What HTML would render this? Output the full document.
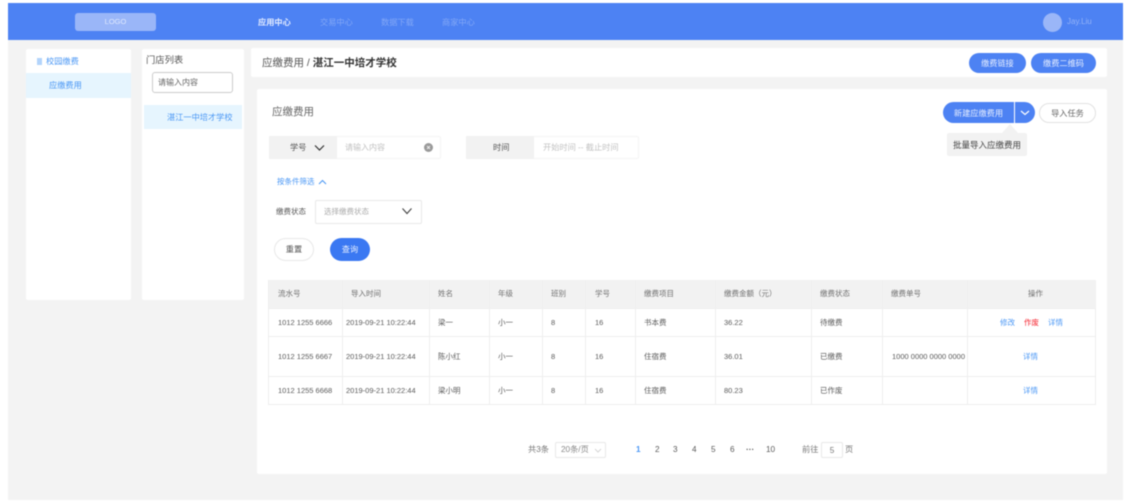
<!DOCTYPE html>
<html lang="zh">
<head>
<meta charset="utf-8">
<style>
html,body{margin:0;padding:0;background:#fff;width:1132px;height:503px;overflow:hidden}
body{font-family:"Liberation Sans","Noto Sans CJK SC",sans-serif;font-size:8.2px;color:#5a5a5a}
#p{position:absolute;left:0;top:0;width:1132px;height:503px;overflow:hidden;filter:blur(.4px)}
#p div{position:absolute;box-sizing:border-box}
#p svg{position:absolute}
.t{white-space:nowrap;line-height:12px;height:12px}
.r{font-size:7.5px}
.c{text-align:center}
.w{background:#fff;border-radius:2px}
.h{color:#707070}
.b{color:#4a97f5}
.l{width:1px;top:280px;height:124px;background:#eeeeee}
.n{width:827px;left:269px;height:1px;background:#eeeeee}
.btn{background:#4d82f3;color:#e6eeff;border-radius:12px;text-align:center}
</style>
</head>
<body>
<div id="p">
<div style="left:8px;top:3px;width:1115px;height:497px;background:#f3f3f3"></div>
<div style="left:8px;top:3px;width:1115px;height:37px;background:#4d82f3"></div>
<div style="left:75px;top:13px;width:81px;height:18px;background:#9ab6f8;border-radius:3px"></div>
<div class="t c" style="left:75px;top:16px;width:81px;color:#dfe8fd;font-size:7.5px">LOGO</div>
<div class="t" style="left:258px;top:16.5px;color:#e4ecff;font-weight:bold">应用中心</div>
<div class="t" style="left:320px;top:16.5px;color:#83a8f7">交易中心</div>
<div class="t" style="left:381px;top:16.5px;color:#83a8f7">数据下载</div>
<div class="t" style="left:442px;top:16.5px;color:#83a8f7">商家中心</div>
<div style="left:1043px;top:12.5px;width:19px;height:19px;background:#9ab6f8;border-radius:50%"></div>
<div class="t" style="left:1067px;top:16px;color:#94b3f8;font-size:8px">Jay.Liu</div>

<div class="w" style="left:26px;top:49px;width:105px;height:251px"></div>
<div style="left:37px;top:58px;width:5px;height:7px;background:#b3d4fb"></div>
<div class="t b" style="left:46px;top:55.5px">校园缴费</div>
<div style="left:26px;top:73px;width:105px;height:25px;background:#e6f5fe"></div>
<div class="t b" style="left:49px;top:80px">应缴费用</div>

<div class="w" style="left:142px;top:49px;width:102px;height:251px"></div>
<div class="t" style="left:146px;top:54px;font-size:9.3px;color:#555">门店列表</div>
<div class="w" style="left:152px;top:71.5px;width:81px;height:21px;border:1px solid #ccc;border-radius:3px"></div>
<div class="t" style="left:158px;top:76.5px;color:#666;font-size:8px">请输入内容</div>
<div style="left:144px;top:105px;width:98px;height:24px;background:#e6f5fe"></div>
<div class="t b" style="left:167px;top:111.5px;font-size:8.2px">湛江一中培才学校</div>

<div class="w" style="left:251px;top:48px;width:856px;height:29px"></div>
<div class="t" style="left:262px;top:57px;font-size:10.5px;color:#555">应缴费用 / <b style="color:#333">湛江一中培才学校</b></div>
<div class="btn" style="left:969px;top:53px;width:57px;height:20px;line-height:22px">缴费链接</div>
<div class="btn" style="left:1031px;top:53px;width:65px;height:20px;line-height:22px">缴费二维码</div>

<div class="w" style="left:257px;top:89px;width:850px;height:385px"></div>
<div class="t" style="left:272px;top:106px;font-size:10.5px;color:#666">应缴费用</div>
<div class="btn" style="left:943px;top:102px;width:71px;height:21px;line-height:23px;border-radius:11px 0 0 11px">新建应缴费用</div>
<div class="btn" style="left:1015px;top:102px;width:20px;height:21px;border-radius:0 11px 11px 0"></div>
<svg style="left:1019px;top:109px" width="12" height="8"><path d="M2 2l4 3.500L10 2" fill="none" stroke="#fff" stroke-width="1.200"/></svg>
<div class="c" style="left:1039px;top:102.5px;width:57px;height:20px;border:1px solid #e2e2e2;border-radius:10px;line-height:19px;color:#666">导入任务</div>
<svg style="left:1002px;top:124px" width="16" height="9"><path d="M0 9L8 0l8 9z" fill="#f2f2f2"/></svg>
<div style="left:947px;top:133px;width:80px;height:23px;background:#f2f2f2;border-radius:2px"></div>
<div class="t" style="left:953px;top:138.5px;color:#444;font-size:8.500px">批量导入应缴费用</div>

<div style="left:268.500px;top:136px;width:172px;height:23px;border:1px solid #f4f4f4;border-radius:2px"></div>
<div style="left:269px;top:136px;width:68px;height:23px;background:#f2f2f2"></div>
<div class="t" style="left:290px;top:141.500px;color:#555">学号</div>
<svg style="left:314px;top:144px" width="11" height="8"><path d="M1 1.500l4.500 4.500L10 1.500" fill="none" stroke="#333" stroke-width="1.200"/></svg>
<div class="t" style="left:345px;top:141.500px;color:#c2c2c2;font-size:8px">请输入内容</div>
<svg style="left:424px;top:143px" width="9" height="9"><circle cx="4.500" cy="4.500" r="4.500" fill="#9a9a9a"/><path d="M3 3l3 3M6 3l-3 3" stroke="#eee" stroke-width=".9"/></svg>
<div style="left:466px;top:136px;width:173px;height:23px;border:1px solid #f4f4f4;border-radius:2px"></div>
<div style="left:466px;top:136px;width:68px;height:23px;background:#f2f2f2"></div>
<div class="t" style="left:493px;top:141.500px;color:#555">时间</div>
<div class="t" style="left:543px;top:141.500px;color:#c2c2c2">开始时间 -- 截止时间</div>

<div class="t b r" style="left:277px;top:176px">按条件筛选</div>
<svg style="left:318px;top:179px" width="9" height="6"><path d="M1 5l3.500-3.500L8 5" fill="none" stroke="#4a97f5" stroke-width="1"/></svg>
<div class="t r" style="left:276px;top:206px;color:#555">缴费状态</div>
<div style="left:315px;top:200px;width:107px;height:24px;border:1px solid #e8e8e8;border-radius:2px"></div>
<div class="t r" style="left:324px;top:206px;color:#aaa">选择缴费状态</div>
<svg style="left:401px;top:207px" width="12" height="9"><path d="M1.500 1.500L6 6.500l4.500-5" fill="none" stroke="#444" stroke-width="1.100"/></svg>
<div class="c" style="left:274px;top:238px;width:40px;height:23px;border:1px solid #e8e8e8;border-radius:12px;line-height:22px;color:#555">重置</div>
<div class="c" style="left:330px;top:238px;width:40px;height:23px;background:#3a78f2;border-radius:12px;line-height:23px;color:#e8f0ff">查询</div>

<div style="left:268px;top:279.500px;width:828px;height:125px;border:1px solid #eeeeee"></div>
<div style="left:268.500px;top:280px;width:827px;height:28.500px;background:#f2f2f2"></div>
<div class="n" style="top:308px"></div>
<div class="n" style="top:336px"></div>
<div class="n" style="top:376px"></div>
<div class="l" style="left:342px"></div>
<div class="l" style="left:429px"></div>
<div class="l" style="left:489px"></div>
<div class="l" style="left:542px"></div>
<div class="l" style="left:585px"></div>
<div class="l" style="left:635px"></div>
<div class="l" style="left:715px"></div>
<div class="l" style="left:811px"></div>
<div class="l" style="left:882px"></div>
<div class="l" style="left:967px"></div>

<div class="t h r" style="left:278px;top:288px">流水号</div>
<div class="t h r" style="left:351px;top:288px">导入时间</div>
<div class="t h r" style="left:438px;top:288px">姓名</div>
<div class="t h r" style="left:498px;top:288px">年级</div>
<div class="t h r" style="left:551px;top:288px">班别</div>
<div class="t h r" style="left:595px;top:288px">学号</div>
<div class="t h r" style="left:644px;top:288px">缴费项目</div>
<div class="t h r" style="left:724px;top:288px">缴费金额（元）</div>
<div class="t h r" style="left:820px;top:288px">缴费状态</div>
<div class="t h r" style="left:891px;top:288px">缴费单号</div>
<div class="t h r c" style="left:971px;top:288px;width:129px">操作</div>

<div class="t r" style="left:278px;top:317px">1012 1255 6666</div>
<div class="t r" style="left:346px;top:317px">2019-09-21 10:22:44</div>
<div class="t r" style="left:438px;top:317px">梁一</div>
<div class="t r" style="left:498px;top:317px">小一</div>
<div class="t r" style="left:551px;top:317px">8</div>
<div class="t r" style="left:595px;top:317px">16</div>
<div class="t r" style="left:644px;top:317px">书本费</div>
<div class="t r" style="left:724px;top:317px">36.22</div>
<div class="t r" style="left:820px;top:317px">待缴费</div>
<div class="t b r" style="left:1000px;top:317px">修改</div>
<div class="t r" style="left:1024px;top:317px;color:#f5222d">作废</div>
<div class="t b r" style="left:1048px;top:317px">详情</div>

<div class="t r" style="left:278px;top:351px">1012 1255 6667</div>
<div class="t r" style="left:346px;top:351px">2019-09-21 10:22:44</div>
<div class="t r" style="left:438px;top:351px">陈小红</div>
<div class="t r" style="left:498px;top:351px">小一</div>
<div class="t r" style="left:551px;top:351px">8</div>
<div class="t r" style="left:595px;top:351px">16</div>
<div class="t r" style="left:644px;top:351px">住宿费</div>
<div class="t r" style="left:724px;top:351px">36.01</div>
<div class="t r" style="left:820px;top:351px">已缴费</div>
<div class="t r" style="left:892px;top:351px">1000 0000 0000 0000</div>
<div class="t b r" style="left:1023px;top:351px">详情</div>

<div class="t r" style="left:278px;top:385px">1012 1255 6668</div>
<div class="t r" style="left:346px;top:385px">2019-09-21 10:22:44</div>
<div class="t r" style="left:438px;top:385px">梁小明</div>
<div class="t r" style="left:498px;top:385px">小一</div>
<div class="t r" style="left:551px;top:385px">8</div>
<div class="t r" style="left:595px;top:385px">16</div>
<div class="t r" style="left:644px;top:385px">住宿费</div>
<div class="t r" style="left:724px;top:385px">80.23</div>
<div class="t r" style="left:820px;top:385px">已作废</div>
<div class="t b r" style="left:1023px;top:385px">详情</div>

<div class="t" style="left:528px;top:444px;color:#777">共3条</div>
<div style="left:555px;top:442px;width:51px;height:16px;border:1px solid #e8e8e8;border-radius:2px"></div>
<div class="t" style="left:561px;top:444px;color:#888">20条/页</div>
<svg style="left:594px;top:448px" width="8" height="5"><path d="M1 1l3 3 3-3" fill="none" stroke="#ccc" stroke-width=".8"/></svg>
<div class="t b" style="left:636px;top:444px;font-weight:bold">1</div>
<div class="t" style="left:655px;top:444px">2</div>
<div class="t" style="left:673px;top:444px">3</div>
<div class="t" style="left:692px;top:444px">4</div>
<div class="t" style="left:711px;top:444px">5</div>
<div class="t" style="left:730px;top:444px">6</div>
<div class="t" style="left:746px;top:444px;font-weight:bold">···</div>
<div class="t" style="left:766px;top:444px">10</div>
<div class="t" style="left:802px;top:444px;color:#777">前往</div>
<div class="c" style="left:821px;top:442px;width:22px;height:16px;border:1px solid #e8e8e8;border-radius:2px;line-height:15px;color:#777">5</div>
<div class="t" style="left:845px;top:444px;color:#777">页</div>
</div>
</body>
</html>
